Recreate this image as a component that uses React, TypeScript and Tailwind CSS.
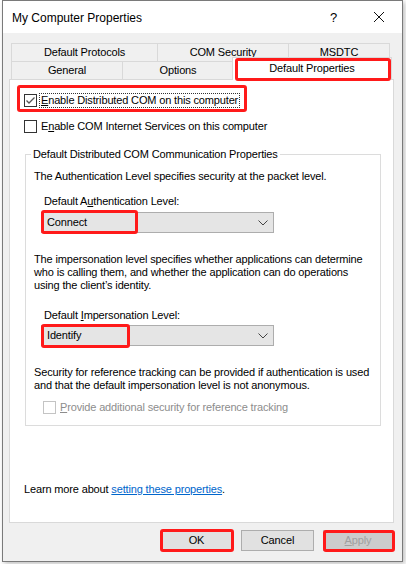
import React from "react";

const RED = "border-[3px] border-[#ff1a1a] rounded-[3px]";

function Box({ checked, disabled }: { checked?: boolean; disabled?: boolean }) {
  return (
    <div
      className={`w-[13px] h-[13px] shrink-0 bg-white border ${
        disabled ? "border-[#c4c4c4]" : "border-[#333333]"
      } flex items-center justify-center`}
    >
      {checked && (
        <svg width="11" height="11" viewBox="0 0 11 11">
          <polyline points="1.5,5.5 4,8 9.5,2.5" fill="none" stroke="#555555" strokeWidth="1.3" />
        </svg>
      )}
    </div>
  );
}

function Chevron() {
  return (
    <svg width="10" height="6" viewBox="0 0 10 6">
      <polyline points="0.5,0.5 5,5 9.5,0.5" fill="none" stroke="#444444" strokeWidth="1" />
    </svg>
  );
}

function Combo({ value, redW, redTop }: { value: string; redW: number; redTop: string }) {
  return (
    <div className="relative ml-[7px] w-[233px] h-[21px] bg-[#e5e5e5] border border-[#adadad] flex items-center justify-between pl-[5px] pr-[5px]">
      <span>{value}</span>
      <Chevron />
      <div
        className={`absolute left-[-1px] ${redTop} h-[24px] ${RED}`}
        style={{ width: redW }}
      />
    </div>
  );
}

function Tab({ label, w, last }: { label: string; w: string; last?: boolean }) {
  return (
    <div
      className={`${w} h-full flex items-center justify-center border-t border-l border-[#d9d9d9] ${
        last ? "border-r" : ""
      } bg-[#f0f0f0]`}
    >
      {label}
    </div>
  );
}

export default function App() {
  return (
    <div className="w-[406px] h-[564px] bg-white pl-[2px] font-['Liberation_Sans',Arial,sans-serif] text-[11px] leading-[13px] tracking-[-0.15px] text-black whitespace-nowrap">
      <div className="w-[401px] h-[562px] border border-[#7a7a7a] shadow-[2px_2px_5px_rgba(0,0,0,0.25)] flex flex-col">
        {/* title bar */}
        <div className="h-[32px] bg-white flex items-center pl-[9px] shrink-0">
          <span className="text-[12px] leading-[14px] tracking-normal flex-1 pt-[2px]">My Computer Properties</span>
          <span className="text-[13px] leading-[14px] mr-[36px] pt-[2px]">?</span>
          <svg width="12" height="12" viewBox="0 0 12 12" className="mr-[17px]">
            <path d="M1 1 L11 11 M11 1 L1 11" stroke="#111" strokeWidth="1" />
          </svg>
        </div>

        {/* body */}
        <div className="flex-1 bg-[#f0f0f0] pt-[10px] pl-[6px] flex flex-col">
          {/* tabs */}
          <div className="ml-[2px] flex flex-col">
            <div className="flex h-[18px]">
              <Tab label="Default Protocols" w="w-[146px]" />
              <Tab label="COM Security" w="w-[131px]" />
              <Tab label="MSDTC" w="w-[102px]" last />
            </div>
            <div className="flex h-[18px] items-end relative z-10">
              <Tab label="General" w="w-[111px]" />
              <Tab label="Options" w="w-[111px]" />
              <div className="relative w-[160px] h-[23px] -mb-[1px] -ml-[1px] bg-white border border-b-0 border-[#d9d9d9] flex items-center justify-center pb-[1px]">
                Default Properties
                <div className={`absolute left-[2px] top-[0px] w-[156px] h-[23px] ${RED}`} />
              </div>
            </div>
          </div>

          {/* panel */}
          <div className="w-[385px] h-[444px] bg-white border border-[#d9d9d9] flex flex-col">
            <div className="relative mt-[13px] ml-[14px] h-[14px] flex items-center">
              <Box checked />
              <span className="ml-[3px] px-[1px] outline outline-1 outline-dotted outline-[#333]">
                <span className="underline">E</span>nable Distributed COM on this computer
              </span>
              <div className={`absolute left-[-7px] top-[-8px] w-[230px] h-[27px] ${RED}`} />
            </div>
            <div className="mt-[12px] ml-[14px] h-[14px] flex items-center">
              <Box />
              <span className="ml-[4px]">
                E<span className="underline">n</span>able COM Internet Services on this computer
              </span>
            </div>

            <fieldset className="mt-[15px] ml-[15px] w-[356px] border border-[#dcdcdc] p-0 m-0 min-w-0">
              <legend className="ml-[5px] px-[2px]">Default Distributed COM Communication Properties</legend>
              <div className="pl-[8px] pb-[11px] flex flex-col">
                <div className="mt-[9px]">The Authentication Level specifies security at the packet level.</div>
                <div className="mt-[12px] ml-[10px]">
                  Default A<span className="underline">u</span>thentication Level:
                </div>
                <div className="mt-[4px]">
                  <Combo value="Connect" redW={97} redTop="top-[-3px]" />
                </div>
                <div className="mt-[20px]">
                  The impersonation level specifies whether applications can determine
                  <br />
                  who is calling them, and whether the application can do operations
                  <br />
                  using the client&#8217;s identity.
                </div>
                <div className="mt-[17px] ml-[10px]">
                  Default <span className="underline">I</span>mpersonation Level:
                </div>
                <div className="mt-[3px]">
                  <Combo value="Identify" redW={89} redTop="top-[-2px]" />
                </div>
                <div className="mt-[20px]">
                  Security for reference tracking can be provided if authentication is used
                  <br />
                  and that the default impersonation level is not anonymous.
                </div>
                <div className="mt-[8px] ml-[9px] h-[14px] flex items-center text-[#8d8d8d]">
                  <Box disabled />
                  <span className="ml-[4px]">
                    <span className="underline">P</span>rovide additional security for reference tracking
                  </span>
                </div>
              </div>
            </fieldset>

            <div className="mt-[57px] ml-[14px]">
              Learn more about{" "}
              <span className="text-[#0066cc] underline">setting these properties</span>.
            </div>
          </div>

          {/* buttons */}
          <div className="mt-[7px] flex justify-end pr-[9px] gap-[9px]">
            <div className="relative w-[71px] h-[21px] bg-[#e1e1e1] border border-[#adadad] flex items-center justify-center">
              OK
              <div className={`absolute left-[-2px] top-[-2px] w-[74px] h-[23px] ${RED}`} />
            </div>
            <div className="w-[73px] h-[21px] bg-[#e1e1e1] border border-[#adadad] flex items-center justify-center">
              Cancel
            </div>
            <div className="relative w-[70px] h-[21px] bg-[#cccccc] border border-[#bfbfbf] flex items-center justify-center text-[#a0a0a0]">
              <span>
                <span className="underline">A</span>pply
              </span>
              <div className={`absolute left-[-1px] top-[-1px] w-[72px] h-[22px] ${RED}`} />
            </div>
          </div>
        </div>
      </div>
    </div>
  );
}
